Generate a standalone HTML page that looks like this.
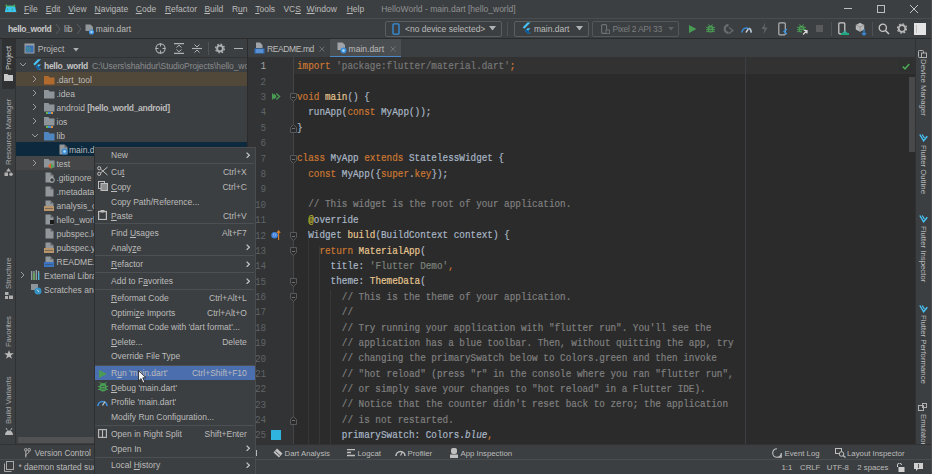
<!DOCTYPE html>
<html><head><meta charset="utf-8">
<style>
*{margin:0;padding:0;box-sizing:border-box}
html,body{width:932px;height:474px;overflow:hidden;background:#3c3f41}
body{position:relative;font-family:"Liberation Sans",sans-serif;font-size:8.5px;color:#bbbbbb}
.a{position:absolute}
.t{position:absolute;white-space:pre;line-height:8.5px}
.u{text-decoration:underline;text-underline-offset:1px}
.vl{position:absolute;white-space:pre;font-size:7.8px;line-height:8px;transform-origin:0 0;transform:rotate(-90deg);color:#a8aaac}
.vr{position:absolute;white-space:pre;font-size:7.8px;line-height:8px;transform-origin:0 0;transform:rotate(90deg);color:#bcbec0}
.bt{position:absolute;white-space:pre;font-size:7.8px;line-height:8.5px}
.cl{-webkit-text-stroke:0.18px currentColor;position:absolute;left:297px;font-family:"Liberation Mono",monospace;font-size:9.333px;line-height:12px;white-space:pre;color:#a9b7c6;transform-origin:0 0;transform:scaleY(1.15)}
.ln{position:absolute;left:248px;width:18.2px;text-align:right;font-family:"Liberation Mono",monospace;font-size:9.333px;line-height:12px;color:#606366;transform-origin:0 0;transform:scaleY(1.12)}
.mono{font-family:"Liberation Mono",monospace}
</style></head><body>

<!-- ===== TITLE BAR ===== -->
<div class="a" style="left:0;top:0;width:932px;height:18px;background:#3c3f41"></div>
<div class="a" style="left:0;top:18px;width:932px;height:1px;background:#4a4d4f"></div>
<!-- android logo -->
<svg class="a" style="left:0;top:0" width="20" height="14" viewBox="0 0 20 14"><path d="M6.3 5.8H14.9L16.4 12.2H4.8Z" fill="#38c6ee"/><path d="M6.2 6.2H15" stroke="#4cb04f" stroke-width="0.9"/><circle cx="6.3" cy="5.4" r="0.85" fill="#4cb04f"/><circle cx="14.4" cy="5.4" r="0.85" fill="#4cb04f"/><circle cx="7.6" cy="9.3" r="0.7" fill="#3a9a5a"/><circle cx="12.4" cy="9.3" r="0.7" fill="#3a9a5a"/><path d="M4.8 12.5H16.4" stroke="#5a3a2a" stroke-width="0.6"/></svg>
<div class="t" style="left:24px;top:4.8px"><span class="u">F</span>ile</div>
<div class="t" style="left:45.8px;top:4.8px"><span class="u">E</span>dit</div>
<div class="t" style="left:68.3px;top:4.8px"><span class="u">V</span>iew</div>
<div class="t" style="left:94.6px;top:4.8px"><span class="u">N</span>avigate</div>
<div class="t" style="left:135.8px;top:4.8px"><span class="u">C</span>ode</div>
<div class="t" style="left:164.9px;top:4.8px"><span class="u">R</span>efactor</div>
<div class="t" style="left:204.4px;top:4.8px"><span class="u">B</span>uild</div>
<div class="t" style="left:231.9px;top:4.8px">R<span class="u">u</span>n</div>
<div class="t" style="left:255.2px;top:4.8px"><span class="u">T</span>ools</div>
<div class="t" style="left:283.4px;top:4.8px">VC<span class="u">S</span></div>
<div class="t" style="left:306.6px;top:4.8px"><span class="u">W</span>indow</div>
<div class="t" style="left:346.7px;top:4.8px"><span class="u">H</span>elp</div>
<div class="t" style="left:381.2px;top:4.8px;color:#8f9192">HelloWorld - main.dart [hello_world]</div>
<!-- window controls -->
<div class="a" style="left:844px;top:8px;width:8px;height:1px;background:#bdbdbd"></div>
<div class="a" style="left:877px;top:5px;width:8px;height:8px;border:1px solid #bdbdbd"></div>
<svg class="a" style="left:909px;top:4px" width="10" height="10" viewBox="0 0 10 10"><path d="M1 1L9 9M9 1L1 9" stroke="#c4c4c4" stroke-width="1"/></svg>


<!-- ===== NAV BAR ===== -->
<div class="a" style="left:0;top:19px;width:932px;height:19px;background:#3c3f41"></div>
<div class="a" style="left:0;top:38px;width:932px;height:1px;background:#2b2b2b"></div>
<!-- breadcrumbs -->
<div class="t" style="left:8px;top:24.8px;font-weight:bold;letter-spacing:-0.35px;color:#c8c8c8">hello_world</div>
<svg class="a" style="left:55px;top:23px" width="6" height="12" viewBox="0 0 6 12"><path d="M1 1L5 6L1 11" fill="none" stroke="#5a5d5f" stroke-width="1"/></svg>
<div class="t" style="left:64px;top:24.8px">lib</div>
<svg class="a" style="left:76px;top:23px" width="6" height="12" viewBox="0 0 6 12"><path d="M1 1L5 6L1 11" fill="none" stroke="#5a5d5f" stroke-width="1"/></svg>
<svg class="a" style="left:85px;top:24px" width="10" height="11" viewBox="0 0 10 11"><path d="M0.5 0.5H5.5L8 3V7H0.5Z" fill="#92979b"/><circle cx="6.5" cy="8" r="2.6" fill="#3b8ed8"/><circle cx="6.5" cy="8" r="1.2" fill="#aad4f5"/></svg>
<div class="t" style="left:95.8px;top:24.8px">main.dart</div>

<!-- device combo -->
<div class="a" style="left:385px;top:21px;width:117px;height:16px;border:1px solid #5b5e60;border-radius:2px"></div>
<svg class="a" style="left:392px;top:23px" width="8" height="12" viewBox="0 0 8 12"><rect x="1" y="0.8" width="6" height="10.4" rx="1" fill="none" stroke="#3592e0" stroke-width="1.3"/></svg>
<div class="t" style="left:405px;top:24.8px">&lt;no device selected&gt;</div>
<svg class="a" style="left:489px;top:26px" width="7" height="5" viewBox="0 0 7 5"><path d="M0 0H7L3.5 4.5Z" fill="#afb1b3"/></svg>
<div class="a" style="left:507px;top:22px;width:1px;height:14px;background:#4f5254"></div>
<!-- main.dart combo -->
<div class="a" style="left:514px;top:21px;width:75px;height:16px;border:1px solid #5b5e60;border-radius:2px"></div>
<svg class="a" style="left:522px;top:22px" width="9" height="13" viewBox="0 0 9 13"><path d="M5.5 0.5L0.8 5.2L2.3 6.7L8.5 0.5Z" fill="#47c5fb"/><path d="M5.5 6.2L3 8.7L5.5 11.2H8.5L6 8.7L8.5 6.2Z" fill="#47c5fb"/><path d="M3 8.7L5.5 11.2H8.5L4.5 7.2Z" fill="#02569b"/></svg>
<div class="t" style="left:534px;top:24.8px">main.dart</div>
<svg class="a" style="left:576px;top:26px" width="7" height="5" viewBox="0 0 7 5"><path d="M0 0H7L3.5 4.5Z" fill="#afb1b3"/></svg>
<!-- pixel combo -->
<div class="a" style="left:592px;top:21px;width:87px;height:16px;border:1px solid #54575a;border-radius:2px"></div>
<svg class="a" style="left:601px;top:24.2px" width="9" height="10" viewBox="0 0 9 10"><rect x="0.6" y="0.6" width="5" height="8.8" rx="1" fill="none" stroke="#6f7274" stroke-width="1.1"/><rect x="5" y="6" width="3.5" height="3.5" fill="#3c3f41" stroke="#6f7274" stroke-width="0.9"/></svg>
<div class="t" style="left:612.5px;top:25.3px;color:#7b7e80;letter-spacing:-0.25px">Pixel 2 API 33</div>
<svg class="a" style="left:668px;top:26.5px" width="6" height="4" viewBox="0 0 7 5"><path d="M0 0H7L3.5 4.5Z" fill="#5f6264"/></svg>
<!-- toolbar icons -->
<svg class="a" style="left:689px;top:24.5px" width="7.5" height="8" viewBox="0 0 7.5 8"><path d="M0 0L7.5 4L0 8Z" fill="#499c54"/></svg>
<svg class="a" style="left:705.8px;top:23.8px" width="9" height="9" viewBox="0 0 9 9"><path d="M2.5 0.3L3.5 1.8M6.5 0.3L5.5 1.8" stroke="#499c54" stroke-width="0.9"/><ellipse cx="4.5" cy="5" rx="3" ry="3.6" fill="#499c54"/><path d="M0 3.3H9M0 5.5H9M0 7.6H9" stroke="#499c54" stroke-width="0.9"/><path d="M3 4.2H6M3 6.6H6" stroke="#3c3f41" stroke-width="0.8"/></svg>
<svg class="a" style="left:723px;top:24px" width="11" height="10" viewBox="0 0 11 10"><path d="M5.5 1.2A3.8 3.8 0 1 0 5.5 8.8" fill="none" stroke="#6a6c6e" stroke-width="2.2"/><path d="M6 3.5L10 6.5L6 9.5" fill="none" stroke="#6a6c6e" stroke-width="1.3"/></svg>
<svg class="a" style="left:741.3px;top:25px" width="11" height="8" viewBox="0 0 11 8"><path d="M1 7.5A4.5 4.5 0 0 1 10 7.5" fill="none" stroke="#3d8ee0" stroke-width="1.5"/><path d="M8.2 3A4.5 4.5 0 0 1 10 7.5" fill="none" stroke="#c8c8c8" stroke-width="1.5"/><path d="M5 7.5L7.3 3.8" stroke="#d8d8d8" stroke-width="1.4"/></svg>
<svg class="a" style="left:761px;top:22px" width="7" height="13" viewBox="0 0 7 13"><path d="M4.5 0.5L0.5 7H3.5L2.5 12.5L6.5 5.5H3.5Z" fill="#626466"/></svg>
<svg class="a" style="left:778px;top:22px" width="10" height="14" viewBox="0 0 10 14"><rect x="0.8" y="0.8" width="6.5" height="12" rx="1" fill="none" stroke="#afb1b3" stroke-width="1.2"/><path d="M9 7L6 9.5L9 12" fill="none" stroke="#3592e0" stroke-width="1.4"/></svg>
<svg class="a" style="left:797px;top:23.5px" width="11" height="11" viewBox="0 0 11 11"><path d="M2.5 0.3L3.5 1.8M6.5 0.3L5.5 1.8" stroke="#499c54" stroke-width="0.9"/><ellipse cx="4.5" cy="5" rx="3" ry="3.6" fill="#499c54"/><path d="M0 3.3H9M0 5.5H9M0 7.6H9" stroke="#499c54" stroke-width="0.9"/><path d="M3 4.2H6M3 6.6H6" stroke="#3c3f41" stroke-width="0.8"/><path d="M5 6.5H11V11H5Z" fill="#3c3f41"/><path d="M6 10.5L10 6.5M7 6.5H10V9.5" fill="none" stroke="#d8d8d8" stroke-width="1.2"/></svg>
<div class="a" style="left:816px;top:25px;width:7px;height:7px;background:#595b5d"></div>
<div class="a" style="left:831px;top:22px;width:1px;height:14px;background:#4f5254"></div>
<svg class="a" style="left:838px;top:22px" width="11" height="13" viewBox="0 0 11 13"><rect x="0.8" y="0.8" width="6" height="11" rx="1" fill="none" stroke="#d0d0d0" stroke-width="1.2"/><path d="M3 12.5L6.5 8.5L9 10.5L10.5 12.5Z" fill="#3ba7a0"/><rect x="3" y="11" width="8" height="2" fill="#1fa97a"/></svg>
<svg class="a" style="left:855px;top:22px" width="12" height="14" viewBox="0 0 12 14"><path d="M5 0.8L9.2 3V7.5L5 9.7L0.8 7.5V3Z" fill="#b9b9b9"/><path d="M5 5L9.2 3M5 5V9.7M5 5L0.8 3" stroke="#8b8b8b" stroke-width="0.8"/><path d="M9 7V13M7 10.8L9 13L11 10.8" fill="none" stroke="#3d8ee0" stroke-width="1.2"/></svg>
<div class="a" style="left:872px;top:22px;width:1px;height:14px;background:#4f5254"></div>
<svg class="a" style="left:878px;top:23px" width="12" height="12" viewBox="0 0 12 12"><circle cx="4.8" cy="4.8" r="3.6" fill="none" stroke="#c8c8c8" stroke-width="1.3"/><path d="M7.5 7.5L11 11" stroke="#c8c8c8" stroke-width="1.5"/></svg>
<svg class="a" style="left:897px;top:23px" width="10" height="11" viewBox="0 0 10 11"><circle cx="5" cy="5.5" r="3.3" fill="none" stroke="#b8b8b8" stroke-width="1.8"/><circle cx="5" cy="5.5" r="4.6" fill="none" stroke="#b8b8b8" stroke-width="1.2" stroke-dasharray="1.8 1.8"/></svg>
<div class="a" style="left:914px;top:23px;width:12px;height:12px;background:#e4e4e4"></div>
<div class="a" style="left:916px;top:25px;width:1px;height:8px;background:#c0c0c0"></div>


<!-- ===== LEFT STRIPE ===== -->
<div class="a" style="left:15px;top:38px;width:1px;height:406px;background:#2f3133"></div>

<!-- ===== PROJECT PANEL ===== -->
<div class="a" style="left:16px;top:57px;width:231px;height:1px;background:#323232"></div>

<!-- left stripe -->
<div class="a" style="left:2px;top:39px;width:12.5px;height:49.5px;background:#2f3133"></div>
<div class="vl" style="left:4.5px;top:70.3px;color:#d0d0d0">Project</div>
<svg class="a" style="left:4px;top:74px" width="9" height="7" viewBox="0 0 9 7"><path d="M0 0H3.5L4.5 1H9V7H0Z" fill="#c8c8c8"/></svg>
<div class="vl" style="left:4.5px;top:164.5px">Resource Manager</div>
<svg class="a" style="left:4px;top:167.8px" width="9" height="8" viewBox="0 0 9 8"><path d="M4.5 0L7 3.5H2Z" fill="#b0b0b0"/><rect x="0.5" y="4.5" width="3.5" height="3.5" fill="#b0b0b0"/><circle cx="7" cy="6.2" r="1.8" fill="#b0b0b0"/></svg>
<div class="vl" style="left:4.5px;top:288.6px">Structure</div>
<svg class="a" style="left:4.5px;top:291.5px" width="8" height="7" viewBox="0 0 8 7"><rect x="0" y="0" width="3.5" height="3" fill="#b0b0b0"/><rect x="4" y="3.5" width="4" height="3.5" fill="#b0b0b0"/><rect x="0" y="4" width="3" height="3" fill="#b0b0b0"/></svg>
<div class="vl" style="left:4.5px;top:346.7px;letter-spacing:-0.15px">Favorites</div>
<svg class="a" style="left:3.5px;top:349.5px" width="10" height="9" viewBox="0 0 10 9"><path d="M5 0L6.2 3.3H9.8L6.9 5.4L8 8.8L5 6.7L2 8.8L3.1 5.4L0.2 3.3H3.8Z" fill="#b8b8b8"/></svg>
<div class="vl" style="left:4.5px;top:423.8px">Build Variants</div>
<svg class="a" style="left:3.5px;top:427px" width="10" height="8" viewBox="0 0 10 8"><path d="M1 8A4 4.5 0 0 1 9 8Z" fill="#b8b8b8"/><path d="M2 1L3.5 3.5M8 1L6.5 3.5" stroke="#b8b8b8" stroke-width="0.9"/></svg>

<!-- project header -->
<svg class="a" style="left:24px;top:43px" width="11" height="11" viewBox="0 0 11 11"><rect x="0.5" y="0.5" width="10" height="10" fill="#9ba1a5"/><rect x="1.5" y="2.5" width="8" height="7" fill="#3d6fb3"/><path d="M2.5 4L4 6.5L2.5 8.5M5 4L6.5 6.5L5 8.5" stroke="#49b36a" stroke-width="0.8" fill="none"/></svg>
<div class="t" style="left:37.8px;top:44.8px">Project</div>
<svg class="a" style="left:73px;top:48px" width="6" height="4" viewBox="0 0 7 5"><path d="M0 0H7L3.5 4.5Z" fill="#afb1b3"/></svg>
<svg class="a" style="left:154.5px;top:43px" width="11" height="11" viewBox="0 0 11 11"><circle cx="5.5" cy="5.5" r="4.6" fill="none" stroke="#afb1b3" stroke-width="1.1"/><path d="M5.5 0.5V3.5M5.5 7.5V10.5M0.5 5.5H3.5M7.5 5.5H10.5" stroke="#afb1b3" stroke-width="1.1"/></svg>
<svg class="a" style="left:174px;top:43px" width="10" height="11" viewBox="0 0 10 11"><path d="M0 0.6H10M0 10.4H10" stroke="#afb1b3" stroke-width="1.1"/><path d="M2.5 4.5L5 2.2L7.5 4.5M2.5 6.5L5 8.8L7.5 6.5" fill="none" stroke="#afb1b3" stroke-width="1"/></svg>
<svg class="a" style="left:191.5px;top:43px" width="10" height="11" viewBox="0 0 10 11"><path d="M0 5.5H10" stroke="#afb1b3" stroke-width="1.1"/><path d="M2.5 1.5L5 4L7.5 1.5M2.5 9.5L5 7L7.5 9.5" fill="none" stroke="#afb1b3" stroke-width="1"/></svg>
<div class="a" style="left:207.5px;top:42px;width:1px;height:13px;background:#505355"></div>
<svg class="a" style="left:214.5px;top:43px" width="10" height="11" viewBox="0 0 10 11"><circle cx="5" cy="5.5" r="2.9" fill="none" stroke="#afb1b3" stroke-width="1.9"/><circle cx="5" cy="5.5" r="4.4" fill="none" stroke="#afb1b3" stroke-width="1.3" stroke-dasharray="1.7 1.75"/></svg>
<div class="a" style="left:233.5px;top:48px;width:9px;height:1.2px;background:#afb1b3"></div>

<!-- tree rows backgrounds -->
<div class="a" style="left:16px;top:72px;width:231px;height:14px;background:#51483a"></div>
<div class="a" style="left:16px;top:142px;width:231px;height:14px;background:#0d293e"></div>
<div class="a" style="left:16px;top:156px;width:231px;height:14px;background:#444648"></div>
<svg class="a" style="left:18.5px;top:62px" width="8" height="5" viewBox="0 0 8 5"><path d="M1 1L4 4L7 1" fill="none" stroke="#9a9c9e" stroke-width="1"/></svg><svg class="a" style="left:33px;top:58.5px" width="8" height="12" viewBox="0 0 8 12"><path d="M5 0.3L0.3 5L1.8 6.5L8 0.3Z" fill="#47c5fb"/><path d="M5 5.6L2.6 8L5 10.5H8L5.6 8L8 5.6Z" fill="#47c5fb"/><path d="M2.6 8L5 10.5H8L4.3 6.3Z" fill="#0f5aa0"/></svg><div class="t" style="left:44px;top:61.8px;font-weight:bold;letter-spacing:-0.3px;color:#c4c4c4">hello_world</div><div class="t" style="left:92px;top:61.8px;color:#8a8c8e;letter-spacing:-0.1px">C:\Users\shahidur\StudioProjects\hello_world</div><svg class="a" style="left:32px;top:75px" width="5" height="8" viewBox="0 0 5 8"><path d="M1 1L4 4L1 7" fill="none" stroke="#9a9c9e" stroke-width="1"/></svg><svg class="a" style="left:44px;top:75.5px" width="11" height="9" viewBox="0 0 11 9"><path d="M0 0H4.5L5.5 1.5H10.5V8.5H0Z" fill="#b06a2e"/></svg><div class="t" style="left:56.5px;top:75.8px">.dart_tool</div><svg class="a" style="left:32px;top:89px" width="5" height="8" viewBox="0 0 5 8"><path d="M1 1L4 4L1 7" fill="none" stroke="#9a9c9e" stroke-width="1"/></svg><svg class="a" style="left:44px;top:89.5px" width="11" height="9" viewBox="0 0 11 9"><path d="M0 0H4.5L5.5 1.5H10.5V8.5H0Z" fill="#8e959a"/></svg><div class="t" style="left:56.5px;top:89.8px">.idea</div><svg class="a" style="left:32px;top:103px" width="5" height="8" viewBox="0 0 5 8"><path d="M1 1L4 4L1 7" fill="none" stroke="#9a9c9e" stroke-width="1"/></svg><svg class="a" style="left:44px;top:103px" width="11" height="9" viewBox="0 0 11 9"><path d="M0 0H4.5L5.5 1.5H10.5V8.5H0Z" fill="#8e959a"/></svg><div class="a" style="left:46px;top:112px;width:7px;height:1.5px;background:linear-gradient(90deg,#62b543 33%,#3d8ee0 33% 66%,#e08f3d 66%)"></div><div class="t" style="left:56.5px;top:103.8px">android <b style="letter-spacing:-0.3px">[hello_world_android]</b></div><svg class="a" style="left:32px;top:117px" width="5" height="8" viewBox="0 0 5 8"><path d="M1 1L4 4L1 7" fill="none" stroke="#9a9c9e" stroke-width="1"/></svg><svg class="a" style="left:44px;top:117px" width="11" height="9" viewBox="0 0 11 9"><path d="M0 0H4.5L5.5 1.5H10.5V8.5H0Z" fill="#8e959a"/></svg><div class="a" style="left:46px;top:126px;width:7px;height:1.5px;background:linear-gradient(90deg,#62b543 33%,#3d8ee0 33% 66%,#e08f3d 66%)"></div><div class="t" style="left:56.5px;top:117.8px">ios</div><svg class="a" style="left:30.5px;top:132.5px" width="8" height="5" viewBox="0 0 8 5"><path d="M1 1L4 4L7 1" fill="none" stroke="#9a9c9e" stroke-width="1"/></svg><svg class="a" style="left:44px;top:131.5px" width="11" height="9" viewBox="0 0 11 9"><path d="M0 0H4.5L5.5 1.5H10.5V8.5H0Z" fill="#4f86bf"/></svg><div class="t" style="left:56.5px;top:131.8px">lib</div><svg class="a" style="left:58.5px;top:144px" width="9" height="11" viewBox="0 0 9 11"><path d="M0.5 0.5H5.5L8.5 3.5V10.5H0.5Z" fill="#92979b"/><path d="M5.5 0.5V3.5H8.5" fill="#5f6366"/></svg><svg class="a" style="left:61px;top:148px" width="7" height="7"><circle cx="3.5" cy="3.5" r="3" fill="#3b8ed8"/><circle cx="3.5" cy="3.5" r="1.3" fill="#b3dcf7"/></svg><div class="t" style="left:69px;top:145.8px">main.dart</div><svg class="a" style="left:32px;top:159px" width="5" height="8" viewBox="0 0 5 8"><path d="M1 1L4 4L1 7" fill="none" stroke="#9a9c9e" stroke-width="1"/></svg><svg class="a" style="left:44px;top:159px" width="11" height="9" viewBox="0 0 11 9"><path d="M0 0H4.5L5.5 1.5H10.5V8.5H0Z" fill="#8e959a"/></svg><svg class="a" style="left:48px;top:163px" width="6" height="6"><path d="M0 3L3 0V6Z" fill="#e0622d"/><path d="M3 0L6 3L3 6Z" fill="#4ca852"/></svg><div class="t" style="left:56.5px;top:159.8px">test</div><svg class="a" style="left:45px;top:172px" width="9" height="11" viewBox="0 0 9 11"><path d="M0.5 0.5H5.5L8.5 3.5V10.5H0.5Z" fill="#92979b"/><path d="M5.5 0.5V3.5H8.5" fill="#5f6366"/></svg><div class="t" style="left:56.5px;top:173.8px">.gitignore</div><svg class="a" style="left:45px;top:186px" width="9" height="11" viewBox="0 0 9 11"><path d="M0.5 0.5H5.5L8.5 3.5V10.5H0.5Z" fill="#92979b"/><path d="M5.5 0.5V3.5H8.5" fill="#5f6366"/></svg><div class="t" style="left:56.5px;top:187.8px">.metadata</div><svg class="a" style="left:45px;top:200px" width="9" height="11" viewBox="0 0 9 11"><path d="M0.5 0.5H5.5L8.5 3.5V10.5H0.5Z" fill="#92979b"/><path d="M5.5 0.5V3.5H8.5" fill="#5f6366"/></svg><div class="t" style="left:56.5px;top:201.8px">analysis_options.yaml</div><svg class="a" style="left:45px;top:214px" width="9" height="11" viewBox="0 0 9 11"><path d="M0.5 0.5H5.5L8.5 3.5V10.5H0.5Z" fill="#92979b"/><path d="M5.5 0.5V3.5H8.5" fill="#5f6366"/></svg><div class="t" style="left:56.5px;top:215.8px">hello_world.iml</div><svg class="a" style="left:45px;top:228px" width="9" height="11" viewBox="0 0 9 11"><path d="M0.5 0.5H5.5L8.5 3.5V10.5H0.5Z" fill="#92979b"/><path d="M5.5 0.5V3.5H8.5" fill="#5f6366"/></svg><div class="t" style="left:56.5px;top:229.8px">pubspec.lock</div><svg class="a" style="left:45px;top:242px" width="9" height="11" viewBox="0 0 9 11"><path d="M0.5 0.5H5.5L8.5 3.5V10.5H0.5Z" fill="#92979b"/><path d="M5.5 0.5V3.5H8.5" fill="#5f6366"/></svg><div class="t" style="left:56.5px;top:243.8px">pubspec.yaml</div><svg class="a" style="left:45px;top:256px" width="9" height="11" viewBox="0 0 9 11"><path d="M0.5 0.5H5.5L8.5 3.5V10.5H0.5Z" fill="#92979b"/><path d="M5.5 0.5V3.5H8.5" fill="#5f6366"/></svg><div class="t" style="left:56.5px;top:257.8px">README.md</div><svg class="a" style="left:19.5px;top:271px" width="5" height="8" viewBox="0 0 5 8"><path d="M1 1L4 4L1 7" fill="none" stroke="#9a9c9e" stroke-width="1"/></svg><svg class="a" style="left:31px;top:270px" width="10" height="10" viewBox="0 0 10 10"><path d="M0.7 1V10M3 1V10M5.3 0V10M7.6 1V10" stroke="#9aa7b0" stroke-width="1.2"/><path d="M3 3V10" stroke="#62b543" stroke-width="1.2"/><path d="M7.6 3V10" stroke="#40b6e0" stroke-width="1.2"/></svg><div class="t" style="left:44px;top:271.8px">External Libraries</div><svg class="a" style="left:31px;top:284px" width="11" height="11" viewBox="0 0 11 11"><rect x="0" y="0" width="7" height="6" fill="#8e959a"/><circle cx="7" cy="7" r="3.5" fill="#3592c4"/><path d="M6 5.5L8 8" stroke="#e0e0e0" stroke-width="0.9"/></svg><div class="t" style="left:44px;top:285.8px">Scratches and Consoles</div><div class="a" style="left:44px;top:206px;width:10px;height:5px;background:#b8956a"></div><div class="a" style="left:45px;top:207.5px;width:8px;height:1px;background:#3c3f41;opacity:.5"></div><div class="a" style="left:44px;top:248px;width:10px;height:5px;background:#b8956a"></div><div class="a" style="left:45px;top:249.5px;width:8px;height:1px;background:#3c3f41;opacity:.5"></div><div class="a" style="left:44px;top:262px;width:10px;height:5px;background:#3b74c0"></div><div class="a" style="left:45px;top:263.5px;width:8px;height:1px;background:#3c3f41;opacity:.5"></div><div class="a" style="left:50px;top:220px;width:4px;height:4px;background:#1a1a1a"></div><svg class="a" style="left:49px;top:176.5px" width="6" height="6"><circle cx="3" cy="3" r="2.3" fill="#3c3f41" stroke="#c0c0c0" stroke-width="0.9"/></svg><div class="a" style="left:18px;top:437px;width:77px;height:6px;background:#505254"></div><div class="a" style="left:247px;top:38px;width:1px;height:406px;background:#2b2b2b"></div>

<!-- ===== EDITOR ===== -->
<div class="a" style="left:248px;top:39px;width:667px;height:18px;background:#3c3f41"></div>
<div class="a" style="left:248px;top:57px;width:667px;height:387px;background:#2b2b2b"></div>


<!-- tabs -->
<div class="a" style="left:329.5px;top:39px;width:71px;height:18.5px;background:#4b4e50"></div>
<div class="a" style="left:329.5px;top:55.5px;width:71px;height:2px;background:#4a88c7"></div>
<svg class="a" style="left:254px;top:42px" width="11" height="12" viewBox="0 0 11 12"><path d="M2 0.5H6L8.5 3V6H2Z" fill="#a0a4a8"/><rect x="0.5" y="6.5" width="10" height="5" fill="#3574c4"/><path d="M2 8H9M2 10H9" stroke="#9cc4f0" stroke-width="0.7"/></svg>
<div class="t" style="left:267px;top:44.9px;letter-spacing:-0.4px">README.md</div>
<svg class="a" style="left:319px;top:45.5px" width="6" height="6" viewBox="0 0 6 6"><path d="M0.5 0.5L5.5 5.5M5.5 0.5L0.5 5.5" stroke="#6e7072" stroke-width="0.9"/></svg>
<svg class="a" style="left:337px;top:42px" width="10" height="12" viewBox="0 0 10 12"><path d="M0.5 0.5H5.5L8 3V8H0.5Z" fill="#a0a4a8"/><circle cx="6.5" cy="8.5" r="3" fill="#3b8ed8"/><circle cx="6.5" cy="8.5" r="1.3" fill="#b3dcf7"/></svg>
<div class="t" style="left:348.6px;top:44.9px">main.dart</div>
<svg class="a" style="left:390px;top:45.5px" width="6" height="6" viewBox="0 0 6 6"><path d="M0.5 0.5L5.5 5.5M5.5 0.5L0.5 5.5" stroke="#737577" stroke-width="0.9"/></svg>

<!-- current line -->
<div class="a" style="left:248px;top:57px;width:45px;height:387px;background:#313335"></div>
<div class="a" style="left:294px;top:57px;width:621px;height:16.8px;background:#323232"></div>
<!-- fold line & guides -->
<div class="a" style="left:293px;top:57px;width:1px;height:387px;background:#444546"></div>
<div class="a" style="left:307.5px;top:230.51px;width:1px;height:213.32000000000002px;background:#373737"></div>
<div class="a" style="left:318.5px;top:245.89px;width:1px;height:197.94px;background:#373737"></div>
<div class="a" style="left:329.5px;top:290.03000000000003px;width:1px;height:153.8px;background:#373737"></div>
<div class="a" style="left:745px;top:57px;width:1px;height:387px;background:#3b3f43"></div>
<svg class="a" style="left:290px;top:93.09px" width="7" height="9" viewBox="0 0 7 9"><path d="M0.5 0.5H6.5V5.5L3.5 8.5L0.5 5.5Z" fill="#2b2b2b" stroke="#5e5f60" stroke-width="0.9"/><path d="M2 4.5H5" stroke="#77787a" stroke-width="0.9"/></svg><svg class="a" style="left:290px;top:123.85px" width="7" height="9" viewBox="0 0 7 9"><path d="M0.5 3.5L3.5 0.5L6.5 3.5V8.5H0.5Z" fill="#2b2b2b" stroke="#5e5f60" stroke-width="0.9"/><path d="M2 4.5H5" stroke="#77787a" stroke-width="0.9"/></svg><svg class="a" style="left:290px;top:154.61px" width="7" height="9" viewBox="0 0 7 9"><path d="M0.5 0.5H6.5V5.5L3.5 8.5L0.5 5.5Z" fill="#2b2b2b" stroke="#5e5f60" stroke-width="0.9"/><path d="M2 4.5H5" stroke="#77787a" stroke-width="0.9"/></svg><svg class="a" style="left:290px;top:231.51px" width="7" height="9" viewBox="0 0 7 9"><path d="M0.5 0.5H6.5V5.5L3.5 8.5L0.5 5.5Z" fill="#2b2b2b" stroke="#5e5f60" stroke-width="0.9"/><path d="M2 4.5H5" stroke="#77787a" stroke-width="0.9"/></svg><svg class="a" style="left:290px;top:246.89px" width="7" height="9" viewBox="0 0 7 9"><path d="M0.5 0.5H6.5V5.5L3.5 8.5L0.5 5.5Z" fill="#2b2b2b" stroke="#5e5f60" stroke-width="0.9"/><path d="M2 4.5H5" stroke="#77787a" stroke-width="0.9"/></svg><svg class="a" style="left:290px;top:277.65000000000003px" width="7" height="9" viewBox="0 0 7 9"><path d="M0.5 0.5H6.5V5.5L3.5 8.5L0.5 5.5Z" fill="#2b2b2b" stroke="#5e5f60" stroke-width="0.9"/><path d="M2 4.5H5" stroke="#77787a" stroke-width="0.9"/></svg><svg class="a" style="left:290px;top:293.03000000000003px" width="7" height="9" viewBox="0 0 7 9"><path d="M0.5 0.5H6.5V5.5L3.5 8.5L0.5 5.5Z" fill="#2b2b2b" stroke="#5e5f60" stroke-width="0.9"/><path d="M2 4.5H5" stroke="#77787a" stroke-width="0.9"/></svg><svg class="a" style="left:290px;top:416.07px" width="7" height="9" viewBox="0 0 7 9"><path d="M0.5 3.5L3.5 0.5L6.5 3.5V8.5H0.5Z" fill="#2b2b2b" stroke="#5e5f60" stroke-width="0.9"/><path d="M2 4.5H5" stroke="#77787a" stroke-width="0.9"/></svg>
<!-- gutter icons -->
<svg class="a" style="left:272px;top:92.8px" width="8.5" height="7" viewBox="0 0 8.5 7"><path d="M0 0L4 3.5L0 7Z" fill="#499c54"/><path d="M4.3 0.6L7.6 3.5L4.3 6.4" fill="none" stroke="#499c54" stroke-width="1.3"/><path d="M2 0.8L4.3 2.8V4.2L2 6.2Z" fill="#499c54"/></svg>
<svg class="a" style="left:271px;top:229.8px" width="10" height="10" viewBox="0 0 10 10"><circle cx="3.6" cy="5.2" r="3.3" fill="#3d7fd8"/><circle cx="3.6" cy="5" r="1.4" fill="none" stroke="#8fb8ea" stroke-width="0.8"/><path d="M7.6 10V1.2M6 3L7.6 0.8L9.2 3" fill="none" stroke="#d9822b" stroke-width="1.1"/></svg>
<div class="a" style="left:271px;top:429.5px;width:10px;height:10px;background:#2fb4e0"></div>
<div class="ln" style="top:60.32px;color:#a4a3a3">1</div><div class="ln" style="top:75.70px">2</div><div class="ln" style="top:91.08px">3</div><div class="ln" style="top:106.46px">4</div><div class="ln" style="top:121.84px">5</div><div class="ln" style="top:137.22px">6</div><div class="ln" style="top:152.60px">7</div><div class="ln" style="top:167.98px">8</div><div class="ln" style="top:183.36px">9</div><div class="ln" style="top:198.74px">10</div><div class="ln" style="top:214.12px">11</div><div class="ln" style="top:229.50px">12</div><div class="ln" style="top:244.88px">13</div><div class="ln" style="top:260.26px">14</div><div class="ln" style="top:275.64px">15</div><div class="ln" style="top:291.02px">16</div><div class="ln" style="top:306.40px">17</div><div class="ln" style="top:321.78px">18</div><div class="ln" style="top:337.16px">19</div><div class="ln" style="top:352.54px">20</div><div class="ln" style="top:367.92px">21</div><div class="ln" style="top:383.30px">22</div><div class="ln" style="top:398.68px">23</div><div class="ln" style="top:414.06px">24</div><div class="ln" style="top:429.44px">25</div>
<div class="cl" style="top:60.04px"><span style="color:#cc7832">import</span><span style="color:#a9b7c6"> </span><span style="color:#787878">'package:flutter/material.dart'</span><span style="color:#cc7832">;</span></div>
<div class="cl" style="top:90.80px"><span style="color:#cc7832">void</span><span style="color:#a9b7c6"> </span><span style="color:#e6c690">main</span><span style="color:#a9b7c6">() {</span></div>
<div class="cl" style="top:106.18px"><span style="color:#a9b7c6">  runApp(</span><span style="color:#cc7832">const</span><span style="color:#a9b7c6"> MyApp());</span></div>
<div class="cl" style="top:121.56px"><span style="color:#a9b7c6">}</span></div>
<div class="cl" style="top:152.32px"><span style="color:#cc7832">class</span><span style="color:#a9b7c6"> MyApp </span><span style="color:#cc7832">extends</span><span style="color:#a9b7c6"> StatelessWidget {</span></div>
<div class="cl" style="top:167.70px"><span style="color:#a9b7c6">  </span><span style="color:#cc7832">const</span><span style="color:#a9b7c6"> MyApp({</span><span style="color:#cc7832">super</span><span style="color:#a9b7c6">.</span><span style="color:#cc7832">key</span><span style="color:#a9b7c6">});</span></div>
<div class="cl" style="top:198.46px"><span style="color:#808080">  // This widget is the root of your application.</span></div>
<div class="cl" style="top:213.84px"><span style="color:#a9b7c6">  </span><span style="color:#bbb529">@</span><span style="color:#a9b7c6">override</span></div>
<div class="cl" style="top:229.22px"><span style="color:#a9b7c6">  Widget </span><span style="color:#e6c690">build</span><span style="color:#a9b7c6">(BuildContext context) {</span></div>
<div class="cl" style="top:244.60px"><span style="color:#a9b7c6">    </span><span style="color:#cc7832">return</span><span style="color:#a9b7c6"> </span><span style="color:#e6c690">MaterialApp</span><span style="color:#a9b7c6">(</span></div>
<div class="cl" style="top:259.98px"><span style="color:#a9b7c6">      title: </span><span style="color:#7d837b">'Flutter Demo'</span><span style="color:#cc7832">,</span></div>
<div class="cl" style="top:275.36px"><span style="color:#a9b7c6">      theme: </span><span style="color:#e6c690">ThemeData</span><span style="color:#a9b7c6">(</span></div>
<div class="cl" style="top:290.74px"><span style="color:#808080">        // This is the theme of your application.</span></div>
<div class="cl" style="top:306.12px"><span style="color:#808080">        //</span></div>
<div class="cl" style="top:321.50px"><span style="color:#808080">        // Try running your application with "flutter run". You'll see the</span></div>
<div class="cl" style="top:336.88px"><span style="color:#808080">        // application has a blue toolbar. Then, without quitting the app, try</span></div>
<div class="cl" style="top:352.26px"><span style="color:#808080">        // changing the primarySwatch below to Colors.green and then invoke</span></div>
<div class="cl" style="top:367.64px"><span style="color:#808080">        // "hot reload" (press "r" in the console where you ran "flutter run",</span></div>
<div class="cl" style="top:383.02px"><span style="color:#808080">        // or simply save your changes to "hot reload" in a Flutter IDE).</span></div>
<div class="cl" style="top:398.40px"><span style="color:#808080">        // Notice that the counter didn't reset back to zero; the application</span></div>
<div class="cl" style="top:413.78px"><span style="color:#808080">        // is not restarted.</span></div>
<div class="cl" style="top:429.16px"><span style="color:#a9b7c6">        primarySwatch: Colors.</span><span style="color:#a9b7c6;font-style:italic">blue</span><span style="color:#cc7832">,</span></div>

<!-- inspection check -->
<div class="a" style="left:899px;top:59px;width:14px;height:13px;background:#2f3030"></div>
<svg class="a" style="left:902px;top:63px" width="8" height="7" viewBox="0 0 8 7"><path d="M0.7 3.5L3 5.8L7.3 1" fill="none" stroke="#4ca852" stroke-width="1.5"/></svg>
<div class="a" style="left:909px;top:77px;width:5.5px;height:74.5px;background:#47494b"></div>
<!-- ===== RIGHT STRIPE ===== -->
<div class="a" style="left:915px;top:38px;width:1px;height:406px;background:#2f3133"></div>

<!-- ===== BOTTOM ===== -->



<!-- right stripe labels -->
<svg class="a" style="left:918px;top:49.5px" width="9" height="8" viewBox="0 0 9 8"><rect x="0.5" y="0.5" width="5" height="7" rx="0.8" fill="none" stroke="#b0b0b0" stroke-width="1"/><rect x="3.5" y="3" width="5" height="4.5" fill="#3c3f41" stroke="#b0b0b0" stroke-width="1"/></svg>
<div class="vr" style="left:926.5px;top:58.8px">Device Manager</div>
<svg class="a" style="left:918.5px;top:133.5px" width="9" height="8" viewBox="0 0 9 8"><path d="M0.8 0.5L4.6 6.8L8.3 2.2" fill="none" stroke="#47c5fb" stroke-width="1.4"/><path d="M3.2 0.5L5.4 4" fill="none" stroke="#47c5fb" stroke-width="1.3"/></svg><div class="vr" style="left:926.5px;top:144.5px">Flutter Outline</div><svg class="a" style="left:918.5px;top:214.5px" width="9" height="8" viewBox="0 0 9 8"><path d="M0.8 0.5L4.6 6.8L8.3 2.2" fill="none" stroke="#47c5fb" stroke-width="1.4"/><path d="M3.2 0.5L5.4 4" fill="none" stroke="#47c5fb" stroke-width="1.3"/></svg><div class="vr" style="left:926.5px;top:225.5px">Flutter Inspector</div><svg class="a" style="left:918.5px;top:304.5px" width="9" height="8" viewBox="0 0 9 8"><path d="M0.8 0.5L4.6 6.8L8.3 2.2" fill="none" stroke="#47c5fb" stroke-width="1.4"/><path d="M3.2 0.5L5.4 4" fill="none" stroke="#47c5fb" stroke-width="1.3"/></svg><div class="vr" style="left:926.5px;top:315.1px">Flutter Performance</div><svg class="a" style="left:918px;top:402.5px" width="9" height="8" viewBox="0 0 9 8"><rect x="0.5" y="2.5" width="5" height="5" fill="none" stroke="#b0b0b0" stroke-width="1"/><rect x="4.5" y="0.5" width="4" height="4" fill="none" stroke="#b0b0b0" stroke-width="1"/></svg><div class="vr" style="left:926.5px;top:413.5px">Emulator</div>
<div class="a" style="left:0;top:444px;width:932px;height:30px;background:#3c3f41"></div>
<div class="a" style="left:0;top:444px;width:932px;height:1px;background:#323232"></div>
<div class="a" style="left:0;top:459px;width:932px;height:1px;background:#4a4d4f"></div>
<div class="a" style="left:931px;top:0;width:1px;height:474px;background:#4a4d4f"></div>
<!-- bottom tool bar -->
<svg class="a" style="left:24px;top:447.5px" width="7" height="10" viewBox="0 0 7 10"><circle cx="1.8" cy="1.8" r="1.3" fill="none" stroke="#b0b0b0" stroke-width="1"/><circle cx="5.2" cy="1.8" r="1.3" fill="none" stroke="#b0b0b0" stroke-width="1"/><path d="M1.8 3V9.5M5.2 3C5.2 6 1.8 5 1.8 8" fill="none" stroke="#b0b0b0" stroke-width="1"/></svg>
<div class="bt" style="left:34.8px;top:450.2px;font-size:8.2px">Version Control</div>
<div class="a" style="left:256.2px;top:450px;width:1.2px;height:6px;background:#b8b8b8"></div>
<svg class="a" style="left:273px;top:448px" width="10" height="10" viewBox="0 0 10 10"><path d="M4 0.5L9.5 5.5L6 9.5L0.5 4.5Z" fill="#c0c0c0"/><path d="M2.5 3.5L7 7.5" stroke="#3c3f41" stroke-width="0.9"/></svg>
<div class="bt" style="left:284.5px;top:449.6px">Dart Analysis</div>
<svg class="a" style="left:347px;top:449px" width="8" height="8" viewBox="0 0 8 8"><path d="M0 0.7H8M0 3.5H4M0 6.5H8" stroke="#c0c0c0" stroke-width="1.3"/></svg>
<div class="bt" style="left:357.5px;top:449.6px">Logcat</div>
<svg class="a" style="left:394.5px;top:449px" width="11" height="7" viewBox="0 0 11 7"><path d="M1 7A4.5 4.5 0 0 1 10 7" fill="none" stroke="#c0c0c0" stroke-width="1.5"/><path d="M5.5 6.5L7.5 3" stroke="#c0c0c0" stroke-width="1.2"/></svg>
<div class="bt" style="left:407.5px;top:449.6px">Profiler</div>
<svg class="a" style="left:450px;top:448px" width="8" height="10" viewBox="0 0 8 10"><rect x="1" y="0" width="6" height="6" rx="2" fill="#c0c0c0"/><rect x="0" y="6.5" width="8" height="3.5" fill="#c0c0c0"/></svg>
<div class="bt" style="left:460.5px;top:449.6px">App Inspection</div>
<svg class="a" style="left:772px;top:448px" width="10" height="10" viewBox="0 0 10 10"><path d="M5 0.7A4.3 4.3 0 1 0 9.3 5V9.3H5" fill="none" stroke="#c0c0c0" stroke-width="1.1"/></svg>
<div class="bt" style="left:784.5px;top:449.6px">Event Log</div>
<svg class="a" style="left:834.5px;top:447.5px" width="11" height="10" viewBox="0 0 11 10"><rect x="0.5" y="0.5" width="6" height="5" fill="none" stroke="#c0c0c0" stroke-width="1"/><circle cx="6.5" cy="6" r="2.3" fill="#3c3f41" stroke="#c0c0c0" stroke-width="1"/><path d="M8 7.5L10.5 9.5" stroke="#c0c0c0" stroke-width="1.2"/></svg>
<div class="bt" style="left:847px;top:449.6px">Layout Inspector</div>

<!-- status bar -->
<svg class="a" style="left:4px;top:461px" width="10" height="11" viewBox="0 0 10 11"><rect x="2.5" y="0.5" width="7" height="8" fill="none" stroke="#a8a8a8" stroke-width="1"/><path d="M0.5 2.5V10.5H7.5" fill="none" stroke="#a8a8a8" stroke-width="1"/></svg>
<div class="bt" style="left:18.5px;top:463.3px;font-size:8.3px">* daemon started successfully</div>
<div class="bt" style="left:781.5px;top:463.5px">1:1</div>
<div class="bt" style="left:800px;top:463.5px">CRLF</div>
<div class="bt" style="left:826.8px;top:463.5px">UTF-8</div>
<div class="bt" style="left:857.3px;top:463.5px">2 spaces</div>
<svg class="a" style="left:896px;top:462.5px" width="9" height="9" viewBox="0 0 9 9"><path d="M1.5 4V2A2 2 0 0 1 5.5 2" fill="none" stroke="#d0d0d0" stroke-width="1"/><rect x="2.5" y="4" width="6" height="5" fill="#d0d0d0"/></svg>
<svg class="a" style="left:914px;top:462.5px" width="9" height="8" viewBox="0 0 9 8"><path d="M0 0H9V6H4L2 8V6H0Z" fill="#d0d0d0"/><path d="M4.5 1V5" stroke="#3c3f41" stroke-width="0.8"/></svg>
<!-- ===== CONTEXT MENU ===== -->
<div class="a" style="left:94px;top:146.5px;width:162px;height:330px;background:#3c3f41;border:1px solid #2d2f31;border-right-color:#4a4c4e;border-top-color:#4a4c4e"></div>
<div class="a" style="left:95px;top:365.7px;width:160px;height:14.4px;background:#4b6eaf"></div>
<div class="t" style="left:111px;top:151.10000000000002px">New</div><svg class="a" style="left:246.3px;top:151.6px" width="4" height="6.5" viewBox="0 0 4 6.5"><path d="M0.6 0.6L3.3 3.25L0.6 5.9" fill="none" stroke="#c4c4c4" stroke-width="1.2"/></svg>
<div class="a" style="left:95px;top:162.7px;width:159px;height:1px;background:#4d5052"></div>
<div class="t" style="left:111px;top:168.10000000000002px">Cu<span class="u">t</span></div><div class="t" style="left:150px;width:96.8px;text-align:right;top:168.10000000000002px">Ctrl+X</div><svg class="a" style="left:97px;top:166.3px" width="11" height="10" viewBox="0 0 11 10"><circle cx="2.2" cy="2.2" r="1.6" fill="none" stroke="#bdbdbd" stroke-width="1"/><circle cx="2.2" cy="7.8" r="1.6" fill="none" stroke="#bdbdbd" stroke-width="1"/><path d="M3.5 3L10.5 9M3.5 7L10.5 1" stroke="#bdbdbd" stroke-width="1"/></svg>
<div class="t" style="left:111px;top:182.8px"><span class="u">C</span>opy</div><div class="t" style="left:150px;width:96.8px;text-align:right;top:182.8px">Ctrl+C</div><svg class="a" style="left:98px;top:181.0px" width="10" height="10" viewBox="0 0 10 10"><rect x="0.5" y="0.5" width="6" height="7" fill="none" stroke="#bdbdbd" stroke-width="1"/><rect x="3" y="2.5" width="6.5" height="7" fill="#8c8e90" stroke="#bdbdbd" stroke-width="1"/></svg>
<div class="t" style="left:111px;top:197.60000000000002px">Copy Path/Reference...</div>
<div class="t" style="left:111px;top:212.20000000000002px"><span class="u">P</span>aste</div><div class="t" style="left:150px;width:96.8px;text-align:right;top:212.20000000000002px">Ctrl+V</div><svg class="a" style="left:98px;top:209.9px" width="9" height="10" viewBox="0 0 9 10"><rect x="0.6" y="1.5" width="7.8" height="8" fill="none" stroke="#bdbdbd" stroke-width="1.2"/><rect x="2.5" y="0" width="4" height="2.5" fill="#bdbdbd"/></svg>
<div class="a" style="left:95px;top:223px;width:159px;height:1px;background:#4d5052"></div>
<div class="t" style="left:111px;top:229.10000000000002px">Find <span class="u">U</span>sages</div><div class="t" style="left:150px;width:96.8px;text-align:right;top:229.10000000000002px">Alt+F7</div>
<div class="t" style="left:111px;top:243.70000000000002px">Analy<span class="u">z</span>e</div><svg class="a" style="left:246.3px;top:244.2px" width="4" height="6.5" viewBox="0 0 4 6.5"><path d="M0.6 0.6L3.3 3.25L0.6 5.9" fill="none" stroke="#c4c4c4" stroke-width="1.2"/></svg>
<div class="a" style="left:95px;top:255.2px;width:159px;height:1px;background:#4d5052"></div>
<div class="t" style="left:111px;top:260.0px"><span class="u">R</span>efactor</div><svg class="a" style="left:246.3px;top:260.5px" width="4" height="6.5" viewBox="0 0 4 6.5"><path d="M0.6 0.6L3.3 3.25L0.6 5.9" fill="none" stroke="#c4c4c4" stroke-width="1.2"/></svg>
<div class="a" style="left:95px;top:272px;width:159px;height:1px;background:#4d5052"></div>
<div class="t" style="left:111px;top:277.2px">Add to F<span class="u">a</span>vorites</div><svg class="a" style="left:246.3px;top:277.7px" width="4" height="6.5" viewBox="0 0 4 6.5"><path d="M0.6 0.6L3.3 3.25L0.6 5.9" fill="none" stroke="#c4c4c4" stroke-width="1.2"/></svg>
<div class="a" style="left:95px;top:288.5px;width:159px;height:1px;background:#4d5052"></div>
<div class="t" style="left:111px;top:294.1px"><span class="u">R</span>eformat Code</div><div class="t" style="left:150px;width:96.8px;text-align:right;top:294.1px">Ctrl+Alt+L</div>
<div class="t" style="left:111px;top:308.7px">Optimi<span class="u">z</span>e Imports</div><div class="t" style="left:150px;width:96.8px;text-align:right;top:308.7px">Ctrl+Alt+O</div>
<div class="t" style="left:111px;top:323.3px">Reformat Code with 'dart format'...</div>
<div class="t" style="left:111px;top:337.90000000000003px"><span class="u">D</span>elete...</div><div class="t" style="left:150px;width:96.8px;text-align:right;top:337.90000000000003px">Delete</div>
<div class="t" style="left:111px;top:352.3px">Override File Type</div>
<div class="a" style="left:95px;top:364.6px;width:159px;height:1px;background:#4d5052"></div>
<div class="t" style="left:111px;top:369.1px">R<span class="u">u</span>n 'main.dart'</div><div class="t" style="left:150px;width:96.8px;text-align:right;top:369.1px">Ctrl+Shift+F10</div><svg class="a" style="left:98.5px;top:370.3px" width="8" height="8" viewBox="0 0 8 8"><path d="M0 0L8 4L0 8Z" fill="#499c54"/></svg>
<div class="t" style="left:111px;top:383.7px"><span class="u">D</span>ebug 'main.dart'</div><svg class="a" style="left:97.5px;top:380.9px" width="10" height="11" viewBox="0 0 10 11"><ellipse cx="5" cy="6.3" rx="3.6" ry="4.3" fill="#499c54"/><path d="M1.5 1L3.5 3M8.5 1L6.5 3M0 5.5H10M0 8.5H10" stroke="#499c54" stroke-width="1"/><path d="M3 5.5H7M3 8H7" stroke="#3c3f41" stroke-width="0.7"/></svg>
<div class="t" style="left:111px;top:398.4px">Profile 'main.dart'</div><svg class="a" style="left:97px;top:399.1px" width="11" height="7" viewBox="0 0 11 7"><path d="M1 7A4.5 4.5 0 0 1 10 7" fill="none" stroke="#3d8ee0" stroke-width="1.7"/><path d="M5.5 6.5L8 2.5" stroke="#c8c8c8" stroke-width="1.2"/></svg>
<div class="t" style="left:111px;top:413.0px">Modify Run Configuration...</div>
<div class="a" style="left:95px;top:425px;width:159px;height:1px;background:#4d5052"></div>
<div class="t" style="left:111px;top:430.0px">Open in Right Split</div><div class="t" style="left:150px;width:96.8px;text-align:right;top:430.0px">Shift+Enter</div><svg class="a" style="left:98px;top:428.7px" width="9" height="9" viewBox="0 0 9 9"><rect x="0.6" y="0.6" width="7.8" height="7.8" fill="none" stroke="#bdbdbd" stroke-width="1.1"/><path d="M4.5 0.6V8.4" stroke="#bdbdbd" stroke-width="1.1"/></svg>
<div class="t" style="left:111px;top:444.6px">Open In</div><svg class="a" style="left:246.3px;top:445.1px" width="4" height="6.5" viewBox="0 0 4 6.5"><path d="M0.6 0.6L3.3 3.25L0.6 5.9" fill="none" stroke="#c4c4c4" stroke-width="1.2"/></svg>
<div class="a" style="left:95px;top:457px;width:159px;height:1px;background:#4d5052"></div>
<div class="t" style="left:111px;top:461.40000000000003px">Local <span class="u">H</span>istory</div><svg class="a" style="left:246.3px;top:461.9px" width="4" height="6.5" viewBox="0 0 4 6.5"><path d="M0.6 0.6L3.3 3.25L0.6 5.9" fill="none" stroke="#c4c4c4" stroke-width="1.2"/></svg>
<svg class="a" style="left:137.5px;top:370px" width="9" height="14" viewBox="0 0 9 14"><path d="M0.5 0.5V11L3 8.6L5 13L6.8 12.2L4.8 7.8H8Z" fill="#f4f4f4" stroke="#1a1a1a" stroke-width="0.8"/></svg></body></html>
